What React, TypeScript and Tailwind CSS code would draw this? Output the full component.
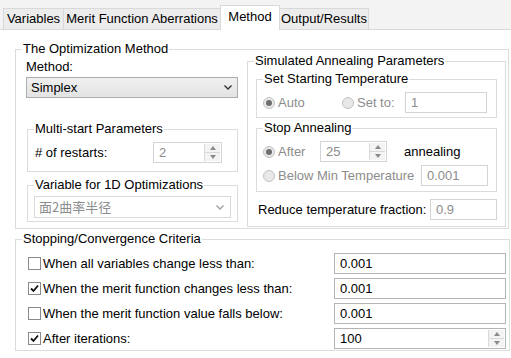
const Tab = ({ label, w, active }: { label: string; w: string; active?: boolean }) => (
  <div
    className={
      active
        ? `${w} h-[25px] -mb-px -ml-px bg-white border border-b-0 border-[#d9d9d9] flex items-center justify-center`
        : `${w} h-[21px] -ml-px bg-[#ececec] border border-b-0 border-[#d9d9d9] flex items-center justify-center`
    }
  >
    <span className={active ? "pb-[3px]" : ""}>{label}</span>
  </div>
);

const SpinArrows = () => (
  <div className="w-[16px] h-full flex flex-col border-l border-[#d9d9d9]">
    <div className="flex-1 flex items-center justify-center bg-[#f3f3f3] border-b border-[#d9d9d9]">
      <svg width="6" height="4" viewBox="0 0 6 4">
        <path d="M0 4 L3 0 L6 4 Z" fill="#8a8a8a" />
      </svg>
    </div>
    <div className="flex-1 flex items-center justify-center bg-[#f3f3f3]">
      <svg width="6" height="4" viewBox="0 0 6 4">
        <path d="M0 0 L3 4 L6 0 Z" fill="#8a8a8a" />
      </svg>
    </div>
  </div>
);

const Field = ({
  value,
  w,
  spin,
  dark,
}: {
  value: string;
  w: string;
  spin?: boolean;
  dark?: boolean;
}) => (
  <div
    className={`${w} h-[21px] flex items-stretch border ${
      dark ? "border-[#b4b4b4] text-black" : "border-[#d4d4d4] text-[#8c8c8c]"
    } bg-white`}
  >
    <span className="flex-1 pl-[5px] leading-[19px]">{value}</span>
    {spin && (
      <div className="py-[1px] pr-[1px]">
        <SpinArrows />
      </div>
    )}
  </div>
);

const Radio = ({ on }: { on?: boolean }) => (
  <span className="w-[12px] h-[12px] rounded-full border border-[#c2c2c2] bg-[#e8e8e8] flex items-center justify-center shrink-0">
    {on && <span className="w-[6px] h-[6px] rounded-full bg-[#6e6e6e]" />}
  </span>
);

const Check = ({ on }: { on?: boolean }) => (
  <span className="w-[13px] h-[13px] border border-[#8a8a8a] bg-white flex items-center justify-center shrink-0">
    {on && (
      <svg width="9" height="9" viewBox="0 0 9 9">
        <path d="M1 4.5 L3.5 7 L8 1.5" stroke="#111" strokeWidth="1.8" fill="none" />
      </svg>
    )}
  </span>
);

const Chevron = ({ color }: { color: string }) => (
  <svg width="8" height="5" viewBox="0 0 8 5">
    <path d="M0.5 0.5 L4 4 L7.5 0.5" stroke={color} strokeWidth="1.4" fill="none" />
  </svg>
);

const Legend = ({ children }: { children: React.ReactNode }) => (
  <legend className="ml-[6px] px-[1px] leading-[16px]">{children}</legend>
);

const criteria = [
  { label: "When all variables change less than:", value: "0.001", on: false },
  { label: "When the merit function changes less than:", value: "0.001", on: true },
  { label: "When the merit function value falls below:", value: "0.001", on: false },
  { label: "After iterations:", value: "100", on: true, spin: true },
];

export default function App() {
  return (
    <div className="w-[511px] h-[358px] overflow-hidden whitespace-nowrap bg-[#f3f3f3] text-[13px] leading-[16px] text-black font-['Liberation_Sans',Arial,sans-serif]">
      <div className="h-[30px] flex items-end pl-[4px] border-b border-[#d9d9d9]">
        <Tab label="Variables" w="w-[61px]" />
        <Tab label="Merit Function Aberrations" w="w-[158px]" />
        <Tab label="Method" w="w-[60px]" active />
        <Tab label="Output/Results" w="w-[90px]" />
      </div>

      <div className="h-[328px] bg-white pt-[11px]">
        <fieldset className="ml-[15px] w-[494px] border border-[#dcdcdc] pb-[1px]">
          <Legend>The Optimization Method</Legend>
          <div className="flex items-start">
            <div className="w-[212px] ml-[10px] flex flex-col">
              <div className="mt-[2px]">Method:</div>
              <div className="mt-[2px] h-[21px] flex items-center justify-between pl-[4px] pr-[5px] border border-[#acacac] bg-gradient-to-b from-[#f0f0f0] to-[#e3e3e3]">
                <span>Simplex</span>
                <Chevron color="#333" />
              </div>

              <fieldset className="mt-[23px] ml-px border border-[#dcdcdc] pb-[8px]">
                <Legend>Multi-start Parameters</Legend>
                <div className="mt-[5px] flex items-center pl-[7px]">
                  <span className="w-[118px]"># of restarts:</span>
                  <Field value="2" w="w-[69px]" spin />
                </div>
              </fieldset>

              <fieldset className="mt-[5px] ml-px border border-[#dcdcdc] pb-[3px]">
                <Legend>Variable for 1D Optimizations</Legend>
                <div className="mt-[3px] mx-[6px] h-[22px] flex items-center justify-between pl-[4px] pr-[6px] border border-[#d9d9d9] bg-white text-[#8c8c8c] font-['Noto_Sans_CJK_SC',sans-serif]">
                  <span>面2曲率半径</span>
                  <Chevron color="#a0a0a0" />
                </div>
              </fieldset>
            </div>

            <fieldset className="-mt-[4px] ml-[9px] w-[259px] border border-[#dcdcdc] pb-[6px]">
              <Legend>Simulated Annealing Parameters</Legend>

              <fieldset className="mt-[2px] ml-[8px] w-[241px] border border-[#dcdcdc] pb-[4px]">
                <Legend>Set Starting Temperature</Legend>
                <div className="mt-[5px] flex items-center pl-[6px] text-[#8c8c8c]">
                  <Radio on />
                  <span className="ml-[3px] w-[64px]">Auto</span>
                  <Radio />
                  <span className="ml-[3px] w-[48px]">Set to:</span>
                  <Field value="1" w="w-[82px]" />
                </div>
              </fieldset>

              <fieldset className="mt-[2px] ml-[8px] w-[241px] border border-[#dcdcdc] pb-[5px]">
                <Legend>Stop Annealing</Legend>
                <div className="mt-[5px] flex items-center pl-[6px]">
                  <Radio on />
                  <span className="ml-[3px] w-[42px] text-[#8c8c8c]">After</span>
                  <Field value="25" w="w-[67px]" spin />
                  <span className="ml-[17px]">annealing</span>
                </div>
                <div className="mt-[3px] flex items-center pl-[6px] text-[#8c8c8c]">
                  <Radio />
                  <span className="ml-[3px] w-[143px]">Below Min Temperature</span>
                  <Field value="0.001" w="w-[67px]" />
                </div>
              </fieldset>

              <div className="mt-[7px] ml-[10px] flex items-center">
                <span className="w-[172px]">Reduce temperature fraction:</span>
                <Field value="0.9" w="w-[67px]" />
              </div>
            </fieldset>
          </div>
        </fieldset>

        <fieldset className="mt-[2px] ml-[15px] w-[495px] border border-[#dcdcdc] pb-px">
          <Legend>Stopping/Convergence Criteria</Legend>
          <div className="mt-[6px] flex flex-col gap-[4px] pl-[12px]">
            {criteria.map((c) => (
              <div key={c.label} className="h-[21px] flex items-center">
                <Check on={c.on} />
                <span className="ml-[2px] w-[291px]">{c.label}</span>
                <Field value={c.value} w="w-[172px]" spin={c.spin} dark />
              </div>
            ))}
          </div>
        </fieldset>
      </div>
    </div>
  );
}
